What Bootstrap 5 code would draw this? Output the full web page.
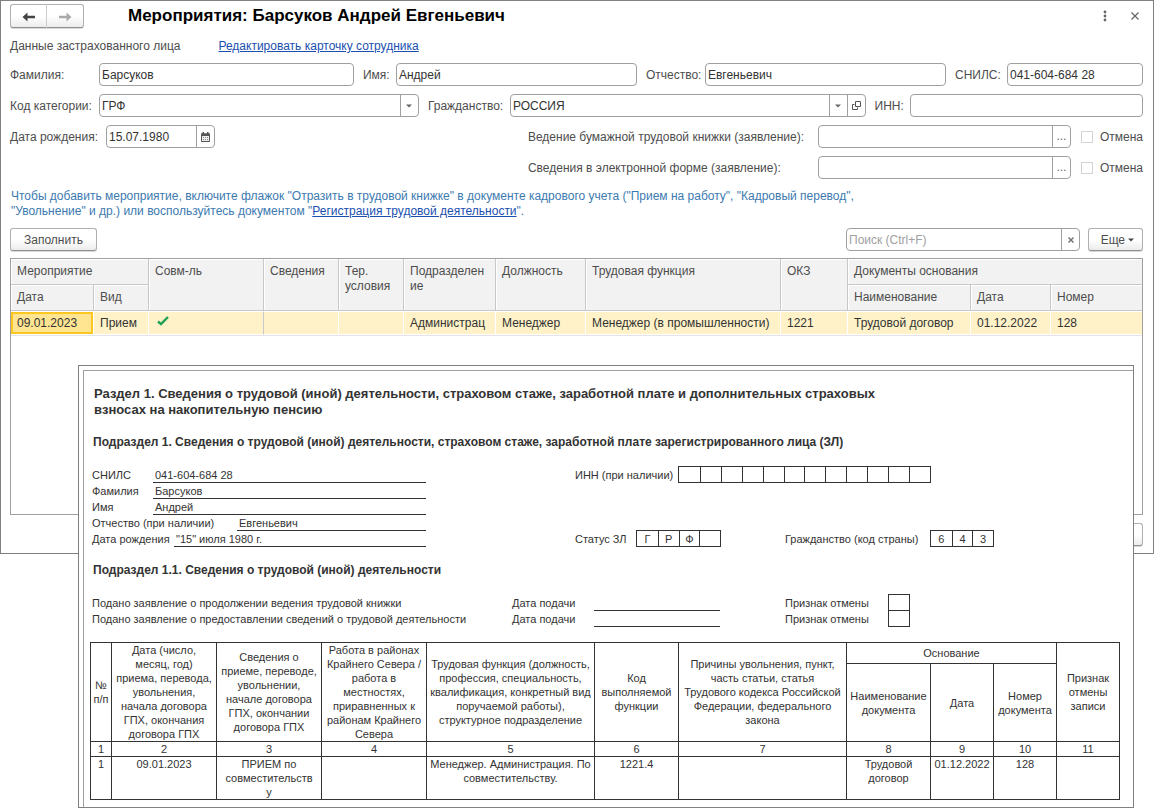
<!DOCTYPE html>
<html lang="ru">
<head>
<meta charset="utf-8">
<meta name="viewport" content="width=device-width, initial-scale=1">
<title>Мероприятия: Барсуков Андрей Евгеньевич</title>
<link href="https://cdn.jsdelivr.net/npm/bootstrap@5.3.0/dist/css/bootstrap.min.css" rel="stylesheet">
<style>
  :root { --line: #a0a0a0; --frame: #808080; --ink: #333; --label: #4d4d4d; }
  body { font: 12px/15px "Liberation Sans", Arial, sans-serif; color: var(--label); background: #fff; }

  /* The window and the printed form share one grid cell, the form on top */
  .stack > * { grid-area: 1 / 1; align-self: start; min-width: 0; }

  /* Application window */
  .app-window { margin-right: 3px; padding: 3px 10px 7px 9px; border: 1px solid var(--frame); }
  .app-title { font-size: 17px; line-height: 24px; font-weight: 700; color: #000; margin-left: 44px; }
  .app-link, .app-link:hover { color: #1a4fb0; text-decoration: underline; }
  .person { gap: 38px; padding: 11px 0 9px; }
  .form-line { height: 23px; margin-bottom: 8px; }
  .form-line label { flex: none; white-space: nowrap; padding-top: 1px; }
  .form-line .field + .next { margin-left: 9px; }
  .w-lead { width: 89px; }
  .w-birth { width: 96px; }
  .w-name { width: 33px; }
  .w-patr { width: 59px; }
  .w-snils { width: 52px; }
  .w-cit { width: 82px; }
  .w-inn { width: 35px; }
  .w-book { width: 290px; }
  .f-long { flex: 255 1 0; }
  .f-mid { flex: 241 1 0; }
  .f-short { flex: 0 0 136px; }
  .f-cat { flex: 320 1 0; }
  .f-cit { flex: 356 1 0; }
  .f-inn { flex: 233 1 0; }
  .f-date { flex: 0 0 109px; }
  .f-doc { flex: 0 0 253px; }
  .f-find { flex: 0 0 234px; }

  .field { display: flex; height: 23px; min-width: 0; border: 1px solid var(--line); border-radius: 4px; background: #fff; overflow: hidden; }
  .field input, .field select { flex: 1; min-width: 0; border: 0; padding: 1px 2px 0; background: none; color: var(--ink); outline: 0; appearance: none; }
  .field input::placeholder { color: #a0a0a0; opacity: 1; }
  .field-key { display: flex; flex: 0 0 18px; align-items: center; justify-content: center; padding: 0; border: 0; border-left: 1px solid var(--line); background: none; color: #666; }
  .tick { width: 12px; height: 12px; margin: 0 7px 0 10px; border: 1px solid #d4d4d4; appearance: none; background: #fff; }

  .push { height: 23px; padding: 0 13px; border: 1px solid #b0b0b0; border-bottom-color: #909090; border-radius: 3px; background: linear-gradient(#fff 50%, #ececec); color: var(--label); font-size: 12px; line-height: 20px; box-shadow: 0 1px 0 #d8d8d8; }
  .push.more { width: 55px; padding: 0 0 0 4px; }
  .nav-pair .push { width: 37px; height: 24px; padding: 0; }
  .nav-pair .push:first-child { border-radius: 3px 0 0 3px; border-right-color: #ccc; }
  .nav-pair .push:last-child { border-radius: 0 3px 3px 0; border-left: 0; }
  .bare { padding: 0; border: 0; background: none; color: #666; line-height: 0; }
  .hint { color: #3c7ab0; margin: 10px 0 9px 1px; }

  /* Events list */
  .list-frame { height: 257px; margin: 7px 0 8px; border: 1px solid var(--line); }
  .events { width: 100%; table-layout: fixed; border-collapse: separate; border-spacing: 0; }
  .events th { height: 26px; padding: 5px 0 0 6px; vertical-align: top; font-weight: 400; background: #f2f2f2; border: 0 solid #c8c8c8; border-width: 0 1px 1px 0; box-shadow: inset 1px 1px #fff; overflow-wrap: anywhere; }
  .events td { height: 24px; padding: 0 0 0 6px; background: #fff2c8; color: var(--ink); white-space: nowrap; overflow: hidden; border: 0 solid #fff; border-width: 1px 1px 1px 0; }
  .events th:last-child, .events td:last-child { border-right: 0; }
  .events tbody tr { box-shadow: 0 1px #e4e4e4; }
  .events td.current { background: #ffe591; box-shadow: inset 0 0 0 2px #fdc620; }
  .events td.ruled { border-right-color: #c8c8c8; }
  .c83 { width: 83px; } .c55 { width: 55px; } .c115 { width: 115px; } .c75 { width: 75px; } .c65 { width: 65px; }
  .c92 { width: 92px; } .c90 { width: 90px; } .c195 { width: 195px; } .c67 { width: 67px; } .c123 { width: 123px; } .c80 { width: 80px; }

  /* Printed form lying over the window */
  .report { z-index: 1; margin: 365px 23px 4px 78px; padding: 4px 0 0 4px; border: 1px solid var(--frame); background: #fff; color: var(--ink); font-size: 11px; }
  .sheet { padding: 15px 13px 7px 6px; border: 1px solid var(--line); border-width: 1px 0 0 1px; }
  .sheet h1 { font-size: 13px; line-height: 16px; font-weight: 700; margin: 0 200px 16px 4px; }
  .sheet h2 { font-size: 12px; line-height: 16px; font-weight: 700; margin: 0 0 16px 3px; }
  .cells { display: grid; grid-template-columns: repeat(49, minmax(0, 1fr)); grid-auto-rows: 16px; line-height: 18px; margin: 0 1px 16px 0; white-space: nowrap; }
  .cells > * { padding-left: 2px; }
  .k0 { grid-column: 1 / span 3; }
  .k20 { grid-column: 21 / span 4; }
  .k23 { grid-column: 24 / span 3; }
  .k33 { grid-column: 34 / span 5; }
  .v3 { grid-column: 4 / 17; }
  .v4 { grid-column: 5 / 17; }
  .v7 { grid-column: 8 / 17; }
  .v24 { grid-column: 25 / 31; }
  .rule { border-bottom: 1px solid var(--ink); margin-bottom: -1px; }
  .cells > .boxes { display: grid; grid-auto-flow: column; grid-auto-columns: 1fr; padding: 0; margin: 0 -1px -1px 0; border: 1px solid var(--ink); line-height: 16px; text-align: center; }
  .boxes span + span { border-left: 1px solid var(--ink); }
  .b28 { grid-column: 29 / 41; }
  .b26 { grid-column: 27 / 31; }
  .b40 { grid-column: 41 / 44; }
  .b38 { grid-column: 39 / 40; }
  .work { width: 100%; table-layout: fixed; border-collapse: collapse; text-align: center; line-height: 14px; }
  .work th, .work td { border: 1px solid var(--ink); padding: 0; font-weight: 400; overflow-wrap: anywhere; }
  .work td { vertical-align: top; }
  .u1 { width: 21px; } .u3 { width: 63px; } .u4 { width: 84px; } .u5 { width: 105px; } .u8 { width: 168px; }
  .h-top { height: 21px; } .h-mid { height: 78px; } .h-num { height: 15px; } .h-row { height: 43px; }
</style>
</head>
<body>
<div class="stack d-grid">
  <main class="app-window">
    <header class="d-flex align-items-center">
      <div class="nav-pair d-flex">
        <button class="push" type="button" aria-label="Назад"><svg width="14" height="10" viewBox="0 0 14 10"><path d="M0.500 5 5.500 0.500V3.800H13V6.200H5.500V9.500Z" fill="#444"/></svg></button>
        <button class="push" type="button" aria-label="Вперед"><svg width="14" height="10" viewBox="0 0 14 10"><path d="M13.500 5 8.500 0.500V3.800H1V6.200H8.500V9.500Z" fill="#aaa"/></svg></button>
      </div>
      <div class="app-title">Мероприятия: Барсуков Андрей Евгеньевич</div>
      <button class="bare ms-auto" type="button" aria-label="Меню"><svg width="4" height="12" viewBox="0 0 4 12" fill="#666"><circle cx="2" cy="2" r="1.400"/><circle cx="2" cy="6" r="1.400"/><circle cx="2" cy="10" r="1.400"/></svg></button>
      <button class="bare ms-4 me-1" type="button" aria-label="Закрыть"><svg width="8" height="8" viewBox="0 0 8 8" stroke="#666" stroke-width="1.200"><path d="M.5.5l7 7M7.500.5l-7 7"/></svg></button>
    </header>
    <div class="person d-flex"><span>Данные застрахованного лица</span><a class="app-link" href="#">Редактировать карточку сотрудника</a></div>

    <div class="form-line d-flex align-items-center">
      <label class="w-lead" for="fam">Фамилия:</label><div class="field f-long"><input id="fam" value="Барсуков"></div>
      <label class="w-name next" for="nam">Имя:</label><div class="field f-mid"><input id="nam" value="Андрей"></div>
      <label class="w-patr next" for="pat">Отчество:</label><div class="field f-mid"><input id="pat" value="Евгеньевич"></div>
      <label class="w-snils next" for="sn">СНИЛС:</label><div class="field f-short"><input id="sn" value="041-604-684 28"></div>
    </div>
    <div class="form-line d-flex align-items-center">
      <label class="w-lead" for="cat">Код категории:</label>
      <div class="field f-cat"><select id="cat"><option>ГРФ</option></select><span class="field-key" aria-hidden="true"><svg width="6" height="4" viewBox="0 0 6 4"><path d="M0 .5H6L3 3.500Z" fill="#666"/></svg></span></div>
      <label class="w-cit next" for="cit">Гражданство:</label>
      <div class="field f-cit"><select id="cit"><option>РОССИЯ</option></select><span class="field-key" aria-hidden="true"><svg width="6" height="4" viewBox="0 0 6 4"><path d="M0 .5H6L3 3.500Z" fill="#666"/></svg></span><button class="field-key" type="button" aria-label="Открыть"><svg width="9" height="9" viewBox="0 0 9 9" fill="none" stroke="#555"><path d="M3.500.5h5v5h-5zM2.500 3.500h-2v5h5v-2"/></svg></button></div>
      <label class="w-inn next" for="inn">ИНН:</label><div class="field f-inn"><input id="inn"></div>
    </div>
    <div class="form-line d-flex align-items-center">
      <label class="w-birth" for="dob">Дата рождения:</label>
      <div class="field f-date"><input id="dob" value="15.07.1980"><button class="field-key" type="button" aria-label="Календарь"><svg width="9" height="10" viewBox="0 0 9 10"><path d="M.5 2h8v7.500h-8z" fill="#eee" stroke="#555"/><path d="M0 1.500h9V4H0zM1.500 0H3v2H1.500zM6 0h1.500v2H6z" fill="#555"/><path d="M2 5.500h5M2 7.500h5" stroke="#888" stroke-dasharray="1 1"/></svg></button></div>
      <label class="w-book ms-auto" for="book">Ведение бумажной трудовой книжки (заявление):</label>
      <div class="field f-doc"><input id="book"><button class="field-key" type="button">...</button></div>
      <input class="tick" type="checkbox" id="c1"><label for="c1">Отмена</label>
    </div>
    <div class="form-line d-flex align-items-center">
      <label class="w-book ms-auto" for="elec">Сведения в электронной форме (заявление):</label>
      <div class="field f-doc"><input id="elec"><button class="field-key" type="button">...</button></div>
      <input class="tick" type="checkbox" id="c2"><label for="c2">Отмена</label>
    </div>

    <p class="hint">Чтобы добавить мероприятие, включите флажок "Отразить в трудовой книжке" в документе кадрового учета ("Прием на работу", "Кадровый перевод",<br>"Увольнение" и др.) или воспользуйтесь документом "<a class="app-link" href="#">Регистрация трудовой деятельности</a>".</p>

    <div class="d-flex">
      <button class="push" type="button">Заполнить</button>
      <div class="field f-find ms-auto me-2"><input placeholder="Поиск (Ctrl+F)" aria-label="Поиск"><button class="field-key" type="button" aria-label="Очистить"><svg width="6" height="6" viewBox="0 0 6 6" stroke="#777" stroke-width="1.500"><path d="M.5.5l5 5M5.500.5l-5 5"/></svg></button></div>
      <button class="push more" type="button">Еще <svg width="6" height="4" viewBox="0 0 6 4"><path d="M0 .5H6L3 3.500Z" fill="#444"/></svg></button>
    </div>

    <div class="list-frame">
      <table class="events">
        <colgroup><col class="c83"><col class="c55"><col class="c115"><col class="c75"><col class="c65"><col class="c92"><col class="c90"><col class="c195"><col class="c67"><col class="c123"><col class="c80"><col></colgroup>
        <thead>
          <tr><th colspan="2">Мероприятие</th><th rowspan="2">Совм-ль</th><th rowspan="2">Сведения</th><th rowspan="2">Тер. условия</th><th rowspan="2">Подразделен<wbr>ие</th><th rowspan="2">Должность</th><th rowspan="2">Трудовая функция</th><th rowspan="2">ОКЗ</th><th colspan="3">Документы основания</th></tr>
          <tr><th>Дата</th><th>Вид</th><th>Наименование</th><th>Дата</th><th>Номер</th></tr>
        </thead>
        <tbody>
          <tr><td class="current">09.01.2023</td><td>Прием</td><td class="ruled"><svg class="d-block mb-1" width="15" height="10" viewBox="0 0 15 10"><path d="M3 5.500 6 8.200 13 1" fill="none" stroke="#1fa055" stroke-width="2.400"/></svg></td><td></td><td></td><td>Администрац</td><td>Менеджер</td><td>Менеджер (в промышленности)</td><td>1221</td><td>Трудовой договор</td><td>01.12.2022</td><td>128</td></tr>
        </tbody>
      </table>
    </div>
    <div class="d-flex justify-content-end"><button class="push more" type="button" aria-label="Еще"></button></div>
  </main>

  <section class="report">
    <div class="sheet">
      <h1>Раздел 1. Сведения о трудовой (иной) деятельности, страховом стаже, заработной плате и дополнительных страховых взносах на накопительную пенсию</h1>
      <h2>Подраздел 1. Сведения о трудовой (иной) деятельности, страховом стаже, заработной плате зарегистрированного лица (ЗЛ)</h2>
      <div class="cells">
        <span class="k0">СНИЛС</span><span class="v3 rule">041-604-684 28</span><span class="k23">ИНН (при наличии)</span><div class="boxes b28"><span></span><span></span><span></span><span></span><span></span><span></span><span></span><span></span><span></span><span></span><span></span><span></span></div>
        <span class="k0">Фамилия</span><span class="v3 rule">Барсуков</span>
        <span class="k0">Имя</span><span class="v3 rule">Андрей</span>
        <span class="k0">Отчество (при наличии)</span><span class="v7 rule">Евгеньевич</span>
        <span class="k0">Дата рождения</span><span class="v4 rule">"15" июля 1980 г.</span><span class="k23">Статус ЗЛ</span><div class="boxes b26"><span>Г</span><span>Р</span><span>Ф</span><span></span></div><span class="k33">Гражданство (код страны)</span><div class="boxes b40"><span>6</span><span>4</span><span>3</span></div>
      </div>
      <h2>Подраздел 1.1. Сведения о трудовой (иной) деятельности</h2>
      <div class="cells">
        <span class="k0">Подано заявление о продолжении ведения трудовой книжки</span><span class="k20">Дата подачи</span><span class="v24 rule"></span><span class="k33">Признак отмены</span><div class="boxes b38"><span></span></div>
        <span class="k0">Подано заявление о предоставлении сведений о трудовой деятельности</span><span class="k20">Дата подачи</span><span class="v24 rule"></span><span class="k33">Признак отмены</span><div class="boxes b38"><span></span></div>
      </div>
      <table class="work">
        <colgroup><col class="u1"><col class="u5"><col class="u5"><col class="u5"><col class="u8"><col class="u4"><col class="u8"><col class="u4"><col class="u3"><col class="u3"><col class="u3"></colgroup>
        <thead>
          <tr class="h-top"><th rowspan="2">№ п/п</th><th rowspan="2">Дата (число,<br>месяц, год)<br>приема, перевода,<br>увольнения,<br>начала договора<br>ГПХ, окончания<br>договора ГПХ</th><th rowspan="2">Сведения о<br>приеме, переводе,<br>увольнении,<br>начале договора<br>ГПХ, окончании<br>договора ГПХ</th><th rowspan="2">Работа в районах Крайнего Севера / работа в<br>местностях, приравненных к районам Крайнего Севера</th><th rowspan="2">Трудовая функция (должность, профессия, специальность, квалификация, конкретный вид поручаемой работы),<br>структурное подразделение</th><th rowspan="2">Код выполняемой функции</th><th rowspan="2">Причины увольнения, пункт,<br>часть статьи, статья<br>Трудового кодекса Российской<br>Федерации, федерального<br>закона</th><th colspan="3">Основание</th><th rowspan="2">Признак отмены записи</th></tr>
          <tr class="h-mid"><th>Наименование документа</th><th>Дата</th><th>Номер документа</th></tr>
          <tr class="h-num"><th>1</th><th>2</th><th>3</th><th>4</th><th>5</th><th>6</th><th>7</th><th>8</th><th>9</th><th>10</th><th>11</th></tr>
        </thead>
        <tbody>
          <tr class="h-row"><td>1</td><td>09.01.2023</td><td>ПРИЕМ по<br>совместительств<br>у</td><td></td><td>Менеджер. Администрация. По совместительству.</td><td>1221.4</td><td></td><td>Трудовой договор</td><td>01.12.2022</td><td>128</td><td></td></tr>
        </tbody>
      </table>
    </div>
  </section>
</div>
<script src="https://cdn.jsdelivr.net/npm/bootstrap@5.3.0/dist/js/bootstrap.bundle.min.js"></script>
</body>
</html>
